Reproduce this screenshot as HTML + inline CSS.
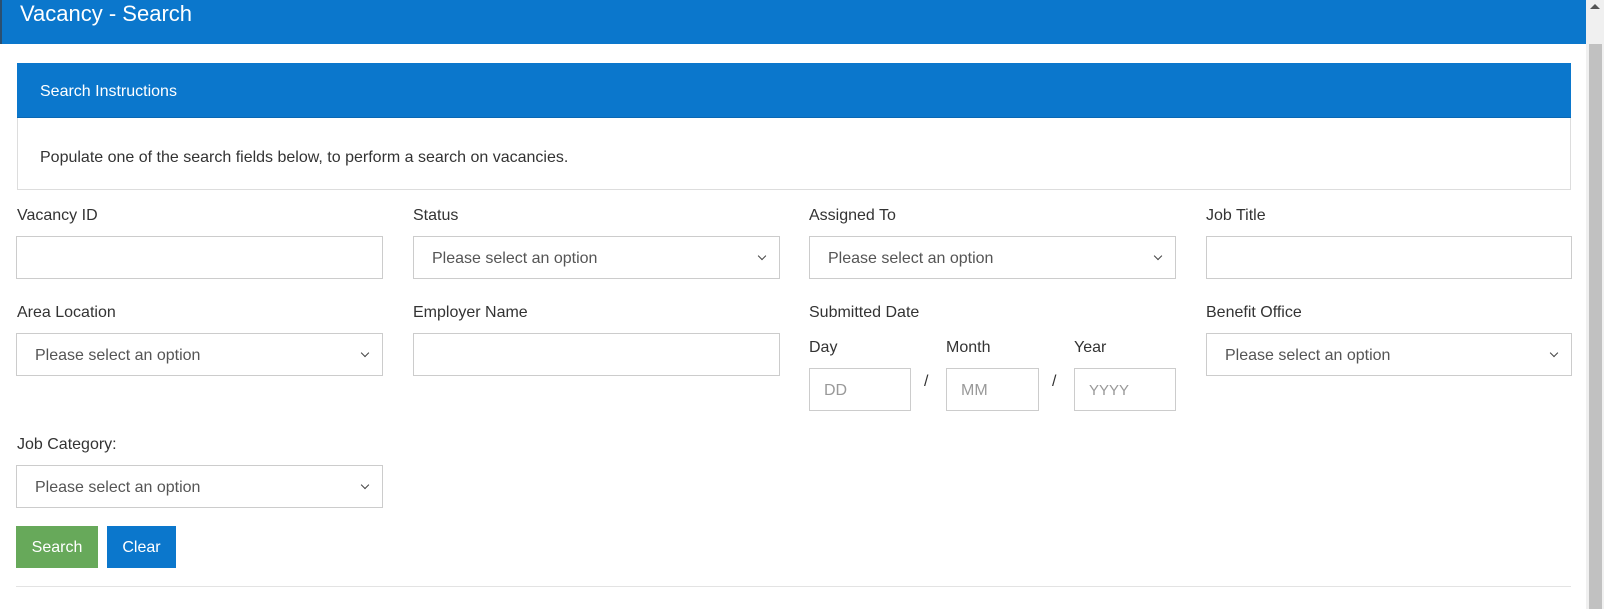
<!DOCTYPE html>
<html><head><meta charset="utf-8"><style>
*{box-sizing:border-box;margin:0;padding:0}
body{width:1604px;height:609px;overflow:hidden;background:#fff;font-family:"Liberation Sans",sans-serif;color:#333;position:relative}
.a{position:absolute}
.hdr{left:0;top:0;width:1587px;height:44px;background:#0b77cc;border-left:2px solid #2a4f70;color:#fff;font-size:22px;line-height:28px;padding-left:18px}
.sb{left:1586px;top:0;width:18px;height:609px;background:#f0f0f0}
.th{left:1589px;top:44px;width:13px;height:565px;background:#c1c1c1}
.ar{left:1590px;top:4px;width:0;height:0;border-left:5px solid transparent;border-right:5px solid transparent;border-bottom:5px solid #555}
.panel{left:17px;top:63px;width:1554px;height:127px;border:1px solid #ddd}
.ph{left:17px;top:63px;width:1554px;height:55px;background:#0b77cc;border-bottom:1px solid #0a68b3;color:#fff;font-size:16px;padding:20px 0 0 23px}
.pb{left:40px;top:149px;font-size:16px}
.lbl{font-size:16px;margin-top:2px}
.box{height:43px;border:1px solid #ccc;background:#fff;font-size:16px;color:#555;padding:13px 0 0 18px}
.sel::after{content:"";position:absolute;right:14px;top:16px;width:5px;height:5px;border-right:1.5px solid #444;border-bottom:1.5px solid #444;transform:rotate(45deg)}
.ph2{color:#999}
.btn{height:42px;color:#fff;font-size:16px;padding:13px 0 0 0;text-align:center}
</style></head><body>
<div class="a hdr">Vacancy - Search</div>
<div class="a sb"></div><div class="a th"></div><div class="a ar"></div>
<div class="a panel"></div>
<div class="a ph">Search Instructions</div>
<div class="a pb">Populate one of the search fields below, to perform a search on vacancies.</div>

<div class="a lbl" style="left:17px;top:205px">Vacancy ID</div>
<div class="a lbl" style="left:413px;top:205px">Status</div>
<div class="a lbl" style="left:809px;top:205px">Assigned To</div>
<div class="a lbl" style="left:1206px;top:205px">Job Title</div>
<div class="a box" style="left:16px;top:236px;width:367px"></div>
<div class="a box sel" style="left:413px;top:236px;width:367px">Please select an option</div>
<div class="a box sel" style="left:809px;top:236px;width:367px">Please select an option</div>
<div class="a box" style="left:1206px;top:236px;width:366px"></div>

<div class="a lbl" style="left:17px;top:302px">Area Location</div>
<div class="a lbl" style="left:413px;top:302px">Employer Name</div>
<div class="a lbl" style="left:809px;top:302px">Submitted Date</div>
<div class="a lbl" style="left:1206px;top:302px">Benefit Office</div>
<div class="a box sel" style="left:16px;top:333px;width:367px">Please select an option</div>
<div class="a box" style="left:413px;top:333px;width:367px"></div>
<div class="a box sel" style="left:1206px;top:333px;width:366px">Please select an option</div>

<div class="a lbl" style="left:809px;top:337px">Day</div>
<div class="a lbl" style="left:946px;top:337px">Month</div>
<div class="a lbl" style="left:1074px;top:337px">Year</div>
<div class="a box ph2" style="left:809px;top:368px;width:102px;padding-left:14px">DD</div>
<div class="a lbl" style="left:924px;top:371px">/</div>
<div class="a box ph2" style="left:946px;top:368px;width:93px;padding-left:14px">MM</div>
<div class="a lbl" style="left:1052px;top:371px">/</div>
<div class="a box ph2" style="left:1074px;top:368px;width:102px;padding-left:14px;font-size:15px">YYYY</div>

<div class="a lbl" style="left:17px;top:434px">Job Category:</div>
<div class="a box sel" style="left:16px;top:465px;width:367px">Please select an option</div>

<div class="a btn" style="left:16px;top:526px;width:82px;background:#67a95a">Search</div>
<div class="a btn" style="left:107px;top:526px;width:69px;background:#0b77cc">Clear</div>
<div class="a" style="left:16px;top:586px;width:1555px;height:1px;background:#e3e3e3"></div>
</body></html>
